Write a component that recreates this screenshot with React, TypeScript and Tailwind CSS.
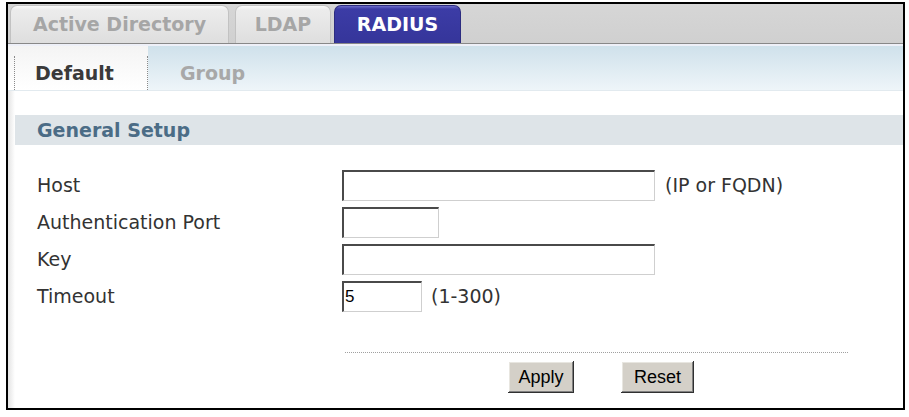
import React from "react";

const sans = { fontFamily: '"DejaVu Sans", Verdana, sans-serif' };
const arial = { fontFamily: '"Liberation Sans", Arial, sans-serif' };

function MainTab({ label, width, active }: { label: string; width: string; active?: boolean }) {
  return active ? (
    <div
      className={`${width} h-[38px] rounded-t-[7px] flex items-center justify-center font-bold text-[19px] text-white bg-[linear-gradient(to_bottom,#6d6dcc_0px,#3c3ca6_3px,#35359a_100%)] border border-b-0 border-[#2c2c80]`}
      style={sans}
    >
      {label}
    </div>
  ) : (
    <div
      className={`${width} h-[38px] rounded-t-[7px] flex items-center justify-center font-bold text-[19px] text-[#a6a6a6] bg-[linear-gradient(to_bottom,#fafafa_0px,#ececec_4px,#dedede_100%)] border border-b-0 border-[#c2c2c2]`}
      style={sans}
    >
      {label}
    </div>
  );
}

function Field({
  label,
  width,
  value,
  suffix,
  suffixGap,
}: {
  label: string;
  width: string;
  value?: string;
  suffix?: string;
  suffixGap?: string;
}) {
  return (
    <div className="flex items-center h-[31px]">
      <div className="w-[305px] text-[19px] text-[#333]" style={sans}>
        {label}
      </div>
      <div
        className={`${width} h-[31px] bg-white border-t-2 border-l-2 border-t-[#4a4a4a] border-l-[#4a4a4a] border-r border-b border-r-[#cfcfcf] border-b-[#cfcfcf] flex items-center pl-[1px] text-[17px] text-black`}
        style={arial}
      >
        {value}
      </div>
      {suffix && (
        <div className={`${suffixGap} text-[19px] text-[#333]`} style={sans}>
          {suffix}
        </div>
      )}
    </div>
  );
}

function Btn({ label, width }: { label: string; width: string }) {
  return (
    <div
      className={`${width} h-[32px] bg-[#d4d0c8] flex items-center justify-center text-[18px] text-black shadow-[inset_-1px_-1px_#303030,inset_1px_1px_#ffffff,inset_-2px_-2px_#808080,inset_2px_2px_#e8e6e0]`}
      style={arial}
    >
      {label}
    </div>
  );
}

export default function App() {
  return (
    <div className="w-[909px] h-[417px] bg-white pl-[6px] pt-[2px]">
      <div className="w-[899px] h-[408px] border-2 border-black flex flex-col overflow-hidden">
        {/* primary tabs */}
        <div className="h-[40px] bg-[linear-gradient(to_bottom,#d6d6d6,#d0d0d0)] border-b border-[#888888] flex items-end pl-[2px]">
          <MainTab label="Active Directory" width="w-[219px]" />
          <div className="w-[6px]" />
          <MainTab label="LDAP" width="w-[96px]" />
          <div className="w-[3px]" />
          <MainTab label="RADIUS" width="w-[127px]" active />
        </div>
        <div className="h-[2px] bg-[#eef0f8]" />

        {/* secondary tabs */}
        <div className="h-[45px] flex border-b border-[#e2eaef]">
          <div className="w-[140px] bg-[linear-gradient(to_bottom,#f4f4f4,#ffffff)] pl-[6px] pt-[10px] flex">
            <div
              className="flex-1 border-l border-r border-dotted border-[#8a8a8a] flex items-center pl-[20px] font-bold text-[19px] text-[#3a3a3a]"
              style={sans}
            >
              Default
            </div>
          </div>
          <div className="flex-1 bg-[linear-gradient(to_bottom,#cfe1eb,#eef5f9)] pl-[32px] pt-[10px] flex items-center">
            <span className="font-bold text-[19px] text-[#a8a8a8]" style={sans}>
              Group
            </span>
          </div>
        </div>

        {/* body */}
        <div className="flex-1 bg-[linear-gradient(to_right,#e4e4e4,#ffffff_7px)] pl-[7px] pt-[24px]">
          <div
            className="h-[30px] bg-[#dee4e8] flex items-center pl-[22px] font-bold text-[19px] text-[#4b6c86]"
            style={sans}
          >
            General Setup
          </div>

          <div className="pl-[22px] pt-[25px] flex flex-col gap-[6px]">
            <Field label="Host" width="w-[313px]" suffix="(IP or FQDN)" suffixGap="ml-[10px]" />
            <Field label="Authentication Port" width="w-[97px]" />
            <Field label="Key" width="w-[313px]" />
            <Field label="Timeout" width="w-[80px]" value="5" suffix="(1-300)" suffixGap="ml-[9px]" />
          </div>

          <div className="ml-[330px] mt-[40px] w-[503px] border-t border-dotted border-[#a0a0a0]" />

          <div className="flex mt-[8px] ml-[493px] gap-[47px]">
            <Btn label="Apply" width="w-[66px]" />
            <Btn label="Reset" width="w-[73px]" />
          </div>
        </div>
      </div>
    </div>
  );
}
